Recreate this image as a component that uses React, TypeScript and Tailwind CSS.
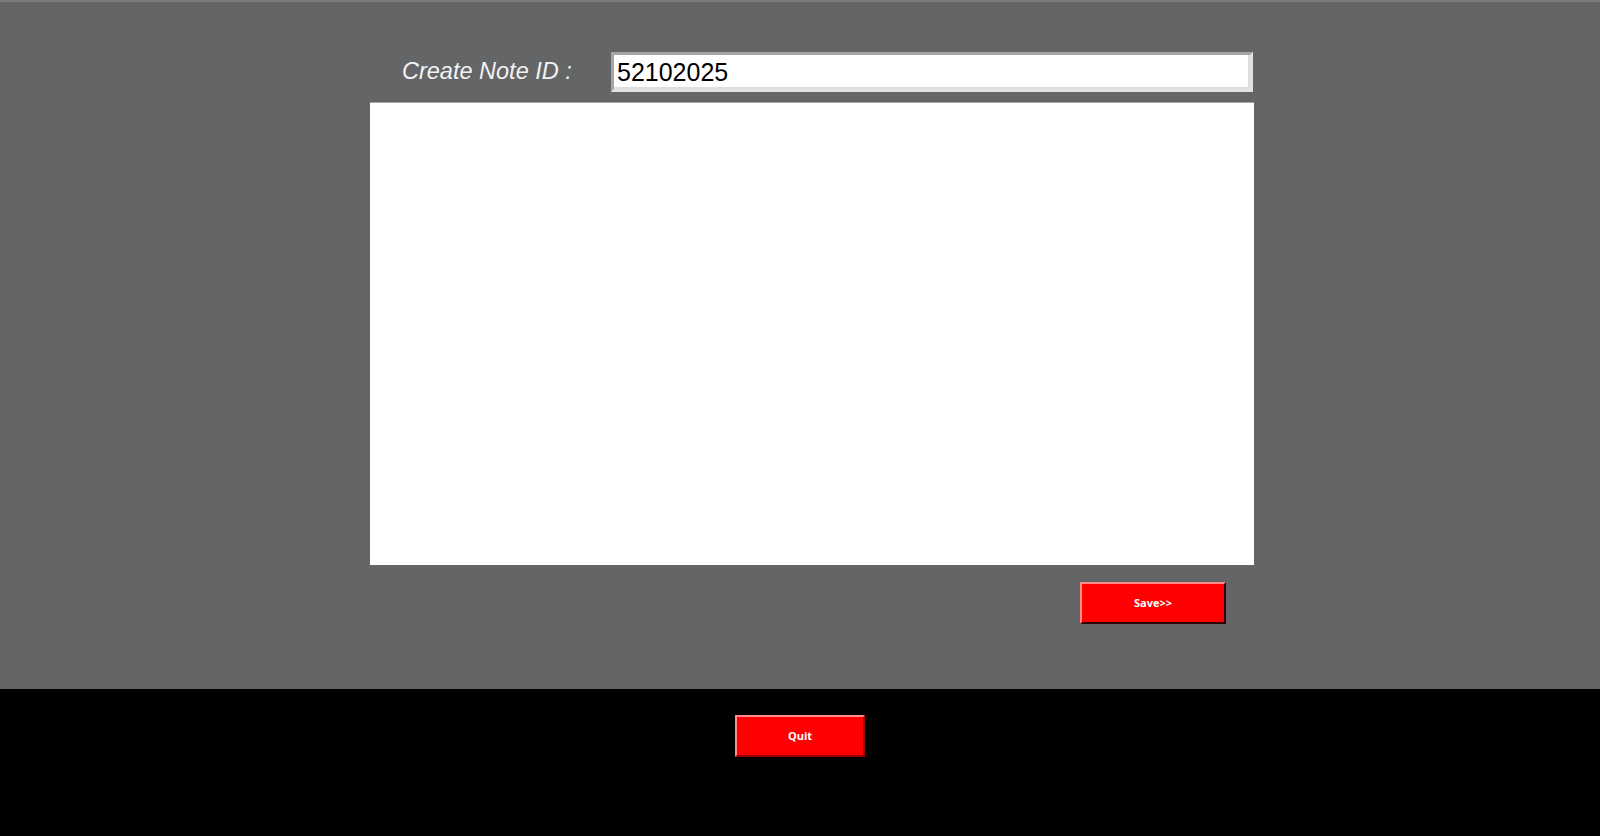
export default function App() {
    return (
        <div className="flex h-[836px] w-full flex-col font-['Liberation_Sans',Arial,sans-serif]">
            {/* Editor area */}
            <div className="h-[689px] border-t-2 border-[#7a7b7d] bg-[#646567]">
                <div className="ml-[370px] flex w-[884px] flex-col pt-[50px]">
                    <div className="flex h-[40px] items-center">
                        <span className="w-[241px] pl-[32px] text-[23.5px] italic text-[#f2f2f2]">Create Note ID :</span>
                        <input
                            type="text"
                            defaultValue="52102025"
                            className="h-[40px] w-[642px] border-[3px] border-t-[#a6a6a6] border-l-[#a6a6a6] border-r-[#e3e3e3] border-b-[#e3e3e3] bg-white px-[3px] text-[25px] text-black outline-none shadow-[inset_-2px_-2px_0_#dedede]"
                        />
                    </div>
                    <textarea className="mt-[10px] h-[463px] w-[884px] resize-none border-t border-[#a6a6a6] bg-white outline-none" />
                    <div className="mt-[17px] flex justify-end pr-[28px]">
                        <button className="h-[42px] w-[146px] border-2 border-t-[#ff8a8a] border-l-[#ff8a8a] border-r-[#300000] border-b-[#300000] bg-[#ff0000] font-['Open_Sans',sans-serif] text-[11px] font-bold text-white">
                            Save&gt;&gt;
                        </button>
                    </div>
                </div>
            </div>

            {/* Footer */}
            <div className="flex flex-1 justify-center bg-black pt-[26px]">
                <button className="h-[42px] w-[130px] border-2 border-t-[#ff8a8a] border-l-[#ff8a8a] border-r-[#a00000] border-b-[#a00000] bg-[#ff0000] font-['Open_Sans',sans-serif] text-[11px] font-bold text-white">
                    Quit
                </button>
            </div>
        </div>
    );
}
